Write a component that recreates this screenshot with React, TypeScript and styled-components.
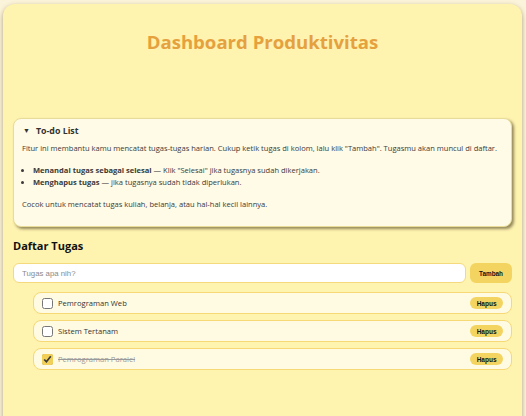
import React, { useState } from 'react'
import styled, { createGlobalStyle } from 'styled-components'

const GlobalStyle = createGlobalStyle`
  html, body {
    margin: 0;
    padding: 0;
    background: #fcf4da;
  }
  body {
    font-family: "Open Sans", "Noto Sans", sans-serif;
    color: #333;
  }
`

const Page = styled.div`
  padding: 4px 4px 0 3px;
  height: 416px;
  overflow: hidden;
  box-sizing: border-box;
`

const Card = styled.main`
  background: #fff3b0;
  border-radius: 12px;
  box-shadow: 0 2px 5px rgba(70, 55, 10, 0.45);
  padding: 27px 10px 0 10px;
  min-height: 440px;
  box-sizing: border-box;
`

const Title = styled.h1`
  margin: 0 0 65px;
  text-align: center;
  font-size: 18.6px;
  line-height: 22px;
  font-weight: 700;
  color: #e5a13e;
`

const Info = styled.details`
  background: #fffbe6;
  border: 1px solid #e8dc98;
  border-radius: 8px;
  box-shadow: 2px 2px 3px rgba(60, 50, 20, 0.55);
  padding: 6px 9px 16px 8px;
  font-size: 7.55px;
  line-height: 12px;
  color: #3a3a3a;
`

const Summary = styled.summary`
  display: block;
  height: 12px;
  font-size: 8.8px;
  font-weight: 700;
  line-height: 12px;
  color: #333;
  cursor: pointer;
  list-style: none;
  &::-webkit-details-marker {
    display: none;
  }
  &::before {
    content: '▼';
    font-size: 7px;
    display: inline-block;
    width: 13px;
    padding-left: 1px;
    vertical-align: 1px;
  }
`

const Text = styled.p<{ top: number }>`
  margin: ${(p) => p.top}px 0 0;
  height: 12px;
`

const Points = styled.ul`
  margin: 10px 0 0;
  padding: 0 0 0 11px;
  li {
    line-height: 12px;
    height: 12px;
  }
`

const SectionTitle = styled.h2`
  margin: 11px 0 0;
  font-size: 11px;
  line-height: 16px;
  font-weight: 700;
  color: #111;
`

const InputRow = styled.div`
  display: flex;
  gap: 4px;
  margin-top: 9px;
`

const TaskInput = styled.input`
  flex: 1;
  height: 20px;
  box-sizing: border-box;
  border: 1px solid #f4da7c;
  border-radius: 6px;
  background: #fff;
  padding: 0 8px;
  font-family: "Liberation Sans", Arial, sans-serif;
  font-size: 7.8px;
  outline: none;
  &::placeholder {
    color: #8a8a8a;
  }
`

const YellowButton = styled.button<{ small?: boolean }>`
  border: none;
  background: #f4d461;
  color: #111;
  font-family: "Liberation Sans", Arial, sans-serif;
  font-weight: 700;
  font-size: ${(p) => (p.small ? 6.5 : 6.4)}px;
  border-radius: 6px;
  height: ${(p) => (p.small ? 12 : 20)}px;
  padding: 0 ${(p) => (p.small ? 6.5 : 9)}px;
  cursor: pointer;
  flex-shrink: 0;
`

const TaskList = styled.ul`
  list-style: none;
  margin: 9px 0 0;
  padding: 0 0 0 20px;
  display: flex;
  flex-direction: column;
  gap: 6px;
`

const TaskItem = styled.li`
  display: flex;
  align-items: center;
  height: 22px;
  box-sizing: border-box;
  background: #fffbe2;
  border: 1px solid #f6d974;
  border-radius: 8px;
  padding: 0 8px 0 8px;
`

const Check = styled.input`
  width: 11px;
  height: 11px;
  margin: 0 5px 0 0;
  accent-color: #f2d058;
`

const TaskText = styled.span<{ done: boolean }>`
  flex: 1;
  font-size: 7.6px;
  color: ${(p) => (p.done ? '#9a9a9a' : '#333')};
  text-decoration: ${(p) => (p.done ? 'line-through' : 'none')};
`

type Task = { id: number; text: string; done: boolean }

export default function App() {
  const [tasks, setTasks] = useState<Task[]>([
    { id: 1, text: 'Pemrograman Web', done: false },
    { id: 2, text: 'Sistem Tertanam', done: false },
    { id: 3, text: 'Pemrograman Paralel', done: true },
  ])
  const [value, setValue] = useState('')

  const add = () => {
    if (!value.trim()) return
    setTasks([...tasks, { id: Date.now(), text: value.trim(), done: false }])
    setValue('')
  }

  return (
    <Page>
      <GlobalStyle />
      <Card>
        <Title>Dashboard Produktivitas</Title>
        <Info open>
          <Summary>To-do List</Summary>
          <Text top={5}>
            Fitur ini membantu kamu mencatat tugas-tugas harian. Cukup ketik tugas di kolom, lalu klik
            "Tambah". Tugasmu akan muncul di daftar.
          </Text>
          <Points>
            <li>
              <strong>Menandai tugas sebagai selesai</strong> — Klik "Selesai" jika tugasnya sudah
              dikerjakan.
            </li>
            <li>
              <strong>Menghapus tugas</strong> — jika tugasnya sudah tidak diperlukan.
            </li>
          </Points>
          <Text top={10}>Cocok untuk mencatat tugas kuliah, belanja, atau hal-hal kecil lainnya.</Text>
        </Info>
        <SectionTitle>Daftar Tugas</SectionTitle>
        <InputRow>
          <TaskInput
            placeholder="Tugas apa nih?"
            value={value}
            onChange={(e) => setValue(e.target.value)}
          />
          <YellowButton onClick={add}>Tambah</YellowButton>
        </InputRow>
        <TaskList>
          {tasks.map((t) => (
            <TaskItem key={t.id}>
              <Check
                type="checkbox"
                checked={t.done}
                onChange={() =>
                  setTasks(tasks.map((x) => (x.id === t.id ? { ...x, done: !x.done } : x)))
                }
              />
              <TaskText done={t.done}>{t.text}</TaskText>
              <YellowButton small onClick={() => setTasks(tasks.filter((x) => x.id !== t.id))}>
                Hapus
              </YellowButton>
            </TaskItem>
          ))}
        </TaskList>
      </Card>
    </Page>
  )
}
